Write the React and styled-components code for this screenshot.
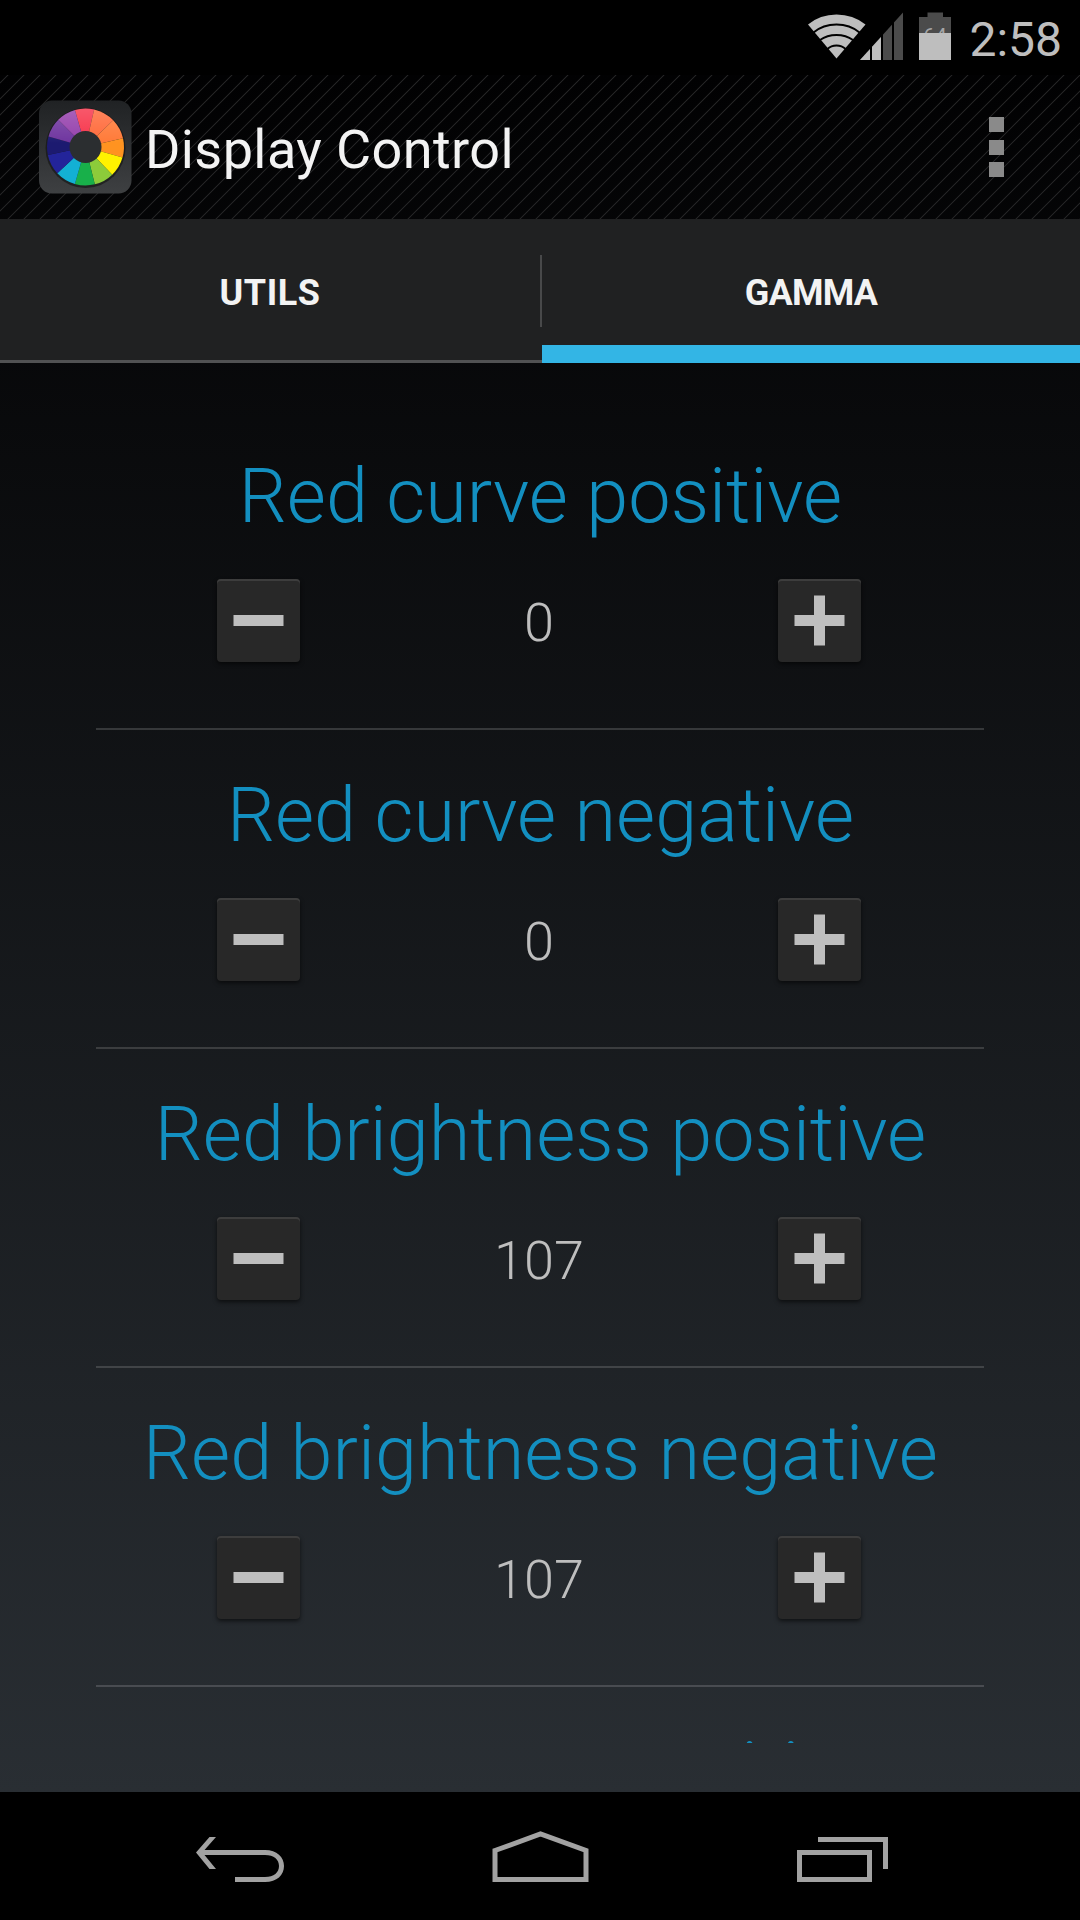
import { useState } from "react";
import styled, { createGlobalStyle } from "styled-components";

const GlobalStyle = createGlobalStyle`
  *, *::before, *::after {
    box-sizing: border-box;
    margin: 0;
    padding: 0;
  }
  body {
    background-color: #000;
    font-family: Roboto, "Liberation Sans", sans-serif;
  }
  button {
    border: none;
    background: none;
    color: inherit;
    font-family: inherit;
  }
  svg {
    display: block;
  }
`;

const Screen = styled.div`
  width: 1080px;
  height: 1920px;
  display: flex;
  flex-direction: column;
  overflow: hidden;
  background-color: #000;
`;
const StatusBar = styled.header`
  height: 75px;
  flex-shrink: 0;
  display: flex;
  justify-content: flex-end;
  padding-right: 18px;
`;
const Clock = styled.p`
  margin-left: 16px;
  font-size: 48px;
  line-height: 80px;
  color: #bebebe;
`;
const Window = styled.div`
  flex: 1;
  min-height: 0;
  display: flex;
  flex-direction: column;
  background: linear-gradient(#010102, #292e33);
`;
const ActionBar = styled.div`
  height: 144px;
  flex-shrink: 0;
  display: flex;
  align-items: center;
  padding: 0 76px 0 38px;
  background: linear-gradient(
      135deg,
      transparent 21%,
      #242425 25%,
      transparent 29%,
      transparent 71%,
      #242425 75%,
      transparent 79%
    )
    0 0 / 16px 16px;
`;
const Title = styled.h1`
  flex: 1;
  margin-left: 13px;
  padding-top: 5px;
  font-size: 54px;
  font-weight: 400;
  line-height: 64px;
  letter-spacing: 0.4px;
  color: #f3f3f3;
`;
const Overflow = styled.button`
  display: flex;
  flex-direction: column;
  gap: 7.5px;
`;
const Dot = styled.span`
  width: 15px;
  height: 15px;
  background-color: #8a8a8a;
`;
const Tabs = styled.nav`
  height: 144px;
  flex-shrink: 0;
  display: flex;
  background-color: #202122;
`;
const Tab = styled.button`
  width: ${(props) => (props.$active ? 538 : 540)}px;
  padding-top: ${(props) => (props.$active ? 22 : 7)}px;
  border-bottom: ${(props) =>
    props.$active ? "18px solid #33b5e5" : "3px solid #515253"};
  font-size: 36px;
  font-weight: 700;
  line-height: 42px;
  letter-spacing: ${(props) => props.$tracking}px;
  color: #f3f3f3;
`;
const TabDivider = styled.div`
  width: 2px;
  padding-top: 36px;
  border-bottom: 3px solid #515253;

  &::before {
    content: "";
    display: block;
    height: 72px;
    background-color: #48494a;
  }
`;
const Scroller = styled.main`
  height: 1380px;
  margin: 0 96px;
  padding-top: 48px;
  overflow: hidden;
`;
const SettingName = styled.h2`
  padding-top: 41px;
  margin: 0 -61px 0 -60px;
  font-size: 75.6px;
  font-weight: 300;
  line-height: 88px;
  white-space: nowrap;
  color: #138fc0;
`;
const Setting = styled.section`
  height: 319px;
  border-bottom: 2px solid ${(props) => props.$line};
  text-align: center;

  &:last-child {
    height: 200px;
    border-bottom: none;
  }
  &:last-child ${SettingName} {
    padding-top: 39px;
  }
  &:last-child ${SettingName}::first-letter {
    font-size: 71px;
  }
`;
const Stepper = styled.div`
  display: flex;
  align-items: center;
  justify-content: space-between;
  margin: 39px 123px 0 121px;
`;
const StepButton = styled.button`
  width: 83px;
  height: 83px;
  display: grid;
  place-items: center;
  border-radius: 4px;
  background-color: #282828;
  box-shadow: inset 0 2px 0 #3d3d3d, 0 2px 4px rgba(0, 0, 0, 0.6);
`;
const Value = styled.p`
  padding-top: 4px;
  font-size: 54px;
  font-weight: 300;
  line-height: 64px;
  color: #bebebe;
`;
const NavBar = styled.footer`
  height: 128px;
  flex-shrink: 0;
  display: flex;
  justify-content: space-between;
  padding: 37px 192px 0 195.5px;
`;

const settings = [
  { name: "Red curve positive", initial: 0, line: "#36383a" },
  { name: "Red curve negative", initial: 0, line: "#3b3d3f" },
  { name: "Red brightness positive", initial: 107, line: "#414447" },
  { name: "Red brightness negative", initial: 107, line: "#494c51" },
  { name: "Green curve positive", initial: 0 },
];

// [start angle, end angle, colour], clockwise from the top
const slices = [
  [-16, 13, "#f7344a"],
  [13, 46, "#ff6a3a"],
  [46, 77, "#ff7a38"],
  [77, 106, "#ff9320"],
  [106, 136, "#fff200"],
  [136, 166, "#8ccb3a"],
  [166, 196, "#18b04a"],
  [196, 227, "#13b0d4"],
  [227, 258, "#23249a"],
  [258, 286, "#1c1a70"],
  [286, 315, "#6f359f"],
  [315, 344, "#9540ac"],
];

function point(angle, r) {
  const a = (angle * Math.PI) / 180;
  return `${47.5 + r * Math.sin(a)} ${47 - r * Math.cos(a)}`;
}

function AppIcon() {
  return (
    <svg width="94" height="94" viewBox="0 0 94 94">
      <defs>
        <linearGradient id="tile" x1="0" y1="0" x2="0" y2="1">
          <stop offset="0" stopColor="#202224" />
          <stop offset="1" stopColor="#3e4042" />
        </linearGradient>
        <linearGradient id="shine" x1="0" y1="0" x2="0" y2="1">
          <stop offset="0" stopColor="#fff" stopOpacity="0.18" />
          <stop offset="0.45" stopColor="#fff" stopOpacity="0" />
        </linearGradient>
      </defs>
      <rect x="1" y="0.5" width="92.5" height="93" rx="13" fill="url(#tile)" />
      <circle cx="47.5" cy="48" r="40" fill="#111" opacity="0.6" />
      {slices.map(([from, to, color]) => (
        <path
          key={from}
          d={`M47.5 47L${point(from, 38.5)}A38.5 38.5 0 0 1 ${point(to, 38.5)}Z`}
          fill={color}
        />
      ))}
      <circle cx="47.5" cy="47" r="38.5" fill="url(#shine)" />
      <circle cx="47.5" cy="47" r="16" fill="#2b2e30" />
    </svg>
  );
}

function StatusIcons() {
  return (
    <svg width="145" height="75" viewBox="808 0 145 75">
      <path d="M836.5 58.5L808 24.5Q820 14.5 836.5 14.5T865.5 24.5Z" fill="#bebebe" />
      <g fill="none" stroke="#000" strokeWidth="2">
        <path d="M813.5 32.5Q823 24.5 836.5 24.5T859.5 32.5" />
        <path d="M820 40Q827 35 836.5 35T853 40" />
        <path d="M827.5 49Q831 45.5 836.5 45.5T845.5 49" />
      </g>
      <path d="M860 60L903 12.5V60Z" fill="#4b4b4b" />
      <path d="M860 60L881.5 36.5V60Z" fill="#bebebe" />
      <path d="M871 12V60M882 12V60M893 12V60" stroke="#000" strokeWidth="2" />
      <path d="M919 17H927.5V12.5H943V17H951V60H919Z" fill="#4b4b4b" />
      <text
        x="935"
        y="43"
        textAnchor="middle"
        fontFamily="Roboto"
        fontSize="21"
        fill="#a5a5a5"
      >
        64
      </text>
      <path d="M919 33H951V60H919Z" fill="#bebebe" />
    </svg>
  );
}

// eslint-disable-next-line react/prop-types
function SettingRow({ name, initial, line }) {
  const [value, setValue] = useState(initial);

  return (
    <Setting $line={line}>
      <SettingName>{name}</SettingName>
      <Stepper>
        <StepButton onClick={() => setValue((v) => v - 1)}>
          <svg width="51" height="51" viewBox="0 0 51 51">
            <path d="M0.5 20H50.5V31H0.5Z" fill="#bebebe" />
          </svg>
        </StepButton>
        <Value>{value}</Value>
        <StepButton onClick={() => setValue((v) => v + 1)}>
          <svg width="51" height="51" viewBox="0 0 51 51">
            <path
              d="M0.5 20H20V0.5H31V20H50.5V31H31V50.5H20V31H0.5Z"
              fill="#bebebe"
            />
          </svg>
        </StepButton>
      </Stepper>
    </Setting>
  );
}

function App() {
  const [tab, setTab] = useState("GAMMA");

  return (
    <>
      <GlobalStyle />
      <Screen>
        <StatusBar>
          <StatusIcons />
          <Clock>2:58</Clock>
        </StatusBar>
        <Window>
          <ActionBar>
            <AppIcon />
            <Title>Display Control</Title>
            <Overflow>
              <Dot />
              <Dot />
              <Dot />
            </Overflow>
          </ActionBar>
          <Tabs>
            <Tab
              $active={tab === "UTILS"}
              $tracking={0.6}
              onClick={() => setTab("UTILS")}
            >
              UTILS
            </Tab>
            <TabDivider />
            <Tab
              $active={tab === "GAMMA"}
              $tracking={-0.8}
              onClick={() => setTab("GAMMA")}
            >
              GAMMA
            </Tab>
          </Tabs>
          <Scroller>
            {settings.map((setting) => (
              <SettingRow key={setting.name} {...setting} />
            ))}
          </Scroller>
        </Window>
        <NavBar>
          <svg width="88" height="56" viewBox="196 1829 88 56">
            <path
              d="M196 1852.5L209.5 1837H216L204.5 1850H265C277 1850 284 1857 284 1866C284 1875 277 1882 265 1882H235V1877H265C274 1877 279 1872.5 279 1866C279 1859.5 274 1855 265 1855H204.5L216 1869H209.5Z"
              fill="#a2a2a2"
            />
          </svg>
          <svg width="97" height="56" viewBox="491.5 1829 97 56">
            <path
              d="M494.5 1850.5L540 1834L585.5 1850.5V1879.5H494.5Z"
              fill="none"
              stroke="#a2a2a2"
              strokeWidth="5"
            />
          </svg>
          <svg width="91" height="56" viewBox="797 1829 91 56">
            <path
              d="M799.5 1852.5H869.5V1879.5H799.5ZM818 1839.5H885.5V1869"
              fill="none"
              stroke="#a2a2a2"
              strokeWidth="5"
            />
          </svg>
        </NavBar>
      </Screen>
    </>
  );
}

export default App;
